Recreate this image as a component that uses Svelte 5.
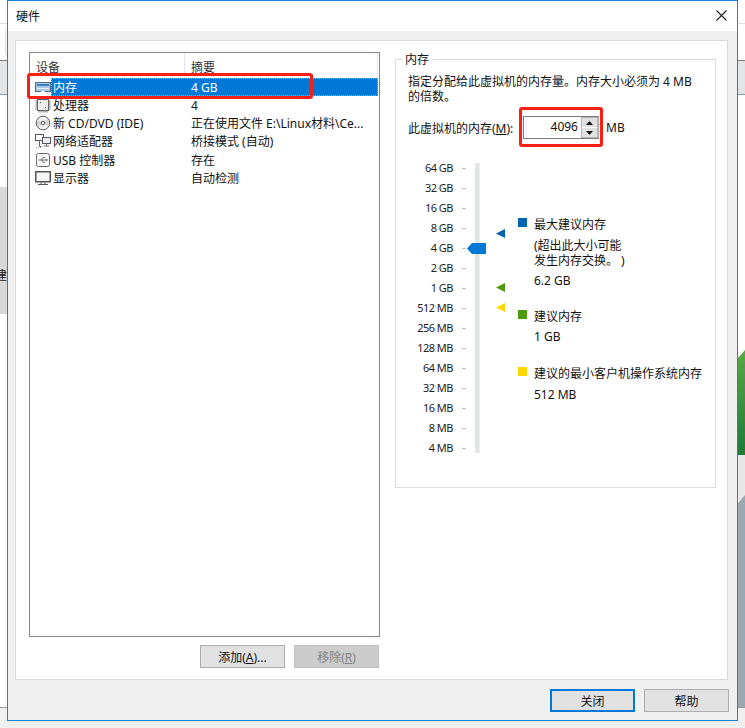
<script lang="ts">
  const devices = [
    { icon: "mem", name: "内存", value: "4 GB" },
    { icon: "cpu", name: "处理器", value: "4" },
    { icon: "cd", name: "新 CD/DVD (IDE)", value: "正在使用文件 E:\\Linux材料\\Ce..." },
    { icon: "net", name: "网络适配器", value: "桥接模式 (自动)" },
    { icon: "usb", name: "USB 控制器", value: "存在" },
    { icon: "mon", name: "显示器", value: "自动检测" },
  ];

  const scale = [
    "64 GB", "32 GB", "16 GB", "8 GB", "4 GB", "2 GB", "1 GB", "512 MB",
    "256 MB", "128 MB", "64 MB", "32 MB", "16 MB", "8 MB", "4 MB",
  ];
</script>

<div class="desk">
  <!-- 后面窗口露出来的部分 -->
  <i class="bg line-l"></i>
  <i class="bg line-r"></i>
  <i class="bg tool"></i>
  <i class="bg band-l"></i>
  <i class="bg band-r"></i>
  <i class="bg grey-l"></i>
  <span class="bg clipped">建</span>
  <svg class="bg green" viewBox="0 0 8 105" preserveAspectRatio="none"><defs><linearGradient id="g" x1="0" y1="0" x2="0" y2="1"><stop offset="0" stop-color="#5aa845" /><stop offset="1" stop-color="#1f7a3c" /></linearGradient></defs><path d="M0 8 L8 0 V105 H0 Z" fill="url(#g)" /></svg>
  <i class="bg pale-r"></i>
  <svg class="bg slate" viewBox="0 0 8 212" preserveAspectRatio="none"><path d="M0 8 L8 0 V212 H0 Z" fill="#9aa8b0" /></svg>
  <i class="bg foot"></i>

  <div class="window">
    <div class="title">
      <span>硬件</span>
      <svg class="close" width="11" height="11" viewBox="0 0 11 11"><path d="M.5.5l10 10M10.5.5l-10 10" stroke="#222" stroke-width="1.1" fill="none" /></svg>
    </div>

    <div class="body">
      <div class="panel">
        <div class="left">
          <div class="list">
            <div class="head">
              <span class="h1">设备</span>
              <span class="h2">摘要</span>
            </div>
            {#each devices as d, i (d.icon)}
              <div class="row">
                <svg class="ico" width="16" height="16" viewBox="0 0 16 16">
                  {#if d.icon === "mem"}
                    <rect x=".5" y="3.5" width="15" height="9" fill="#a9c8e6" stroke="#54697d" />
                    <rect x="2" y="5" width="12" height="2" fill="#3f80bb" />
                    <path d="M2 9.5h12" stroke="#e4f0fa" />
                    <path d="M6 12.5h4" stroke="#e4f0fa" />
                  {:else if d.icon === "cpu"}
                    <rect x="2.5" y="2.5" width="11" height="11" fill="#ededed" stroke="#5f5f5f" />
                    <path d="M4 .5v2M6 .5v2M8 .5v2M10 .5v2M12 .5v2M4 13.5v2M6 13.5v2M8 13.5v2M10 13.5v2M12 13.5v2M.5 4h2M.5 6h2M.5 8h2M.5 10h2M.5 12h2M13.5 4h2M13.5 6h2M13.5 8h2M13.5 10h2M13.5 12h2" stroke="#6d6d6d" />
                    <path d="M5 5h1v1H5zM10 10h1v1h-1z" fill="#666" />
                  {:else if d.icon === "cd"}
                    <circle cx="8" cy="8" r="6.8" fill="#f2f2f2" stroke="#5a5a5a" />
                    <path d="M8 8L3.6 12.2A6 6 0 0 1 3 5z" fill="#d4d4d4" />
                    <path d="M8 8l4.4-4.2A6 6 0 0 1 13 11z" fill="#d4d4d4" />
                    <circle cx="8" cy="8" r="1.8" fill="#fff" stroke="#555" />
                  {:else if d.icon === "net"}
                    <rect x=".5" y="1.5" width="8" height="6" fill="#fff" stroke="#555" />
                    <rect x="7.5" y="4.5" width="8" height="6" fill="#e8eef4" stroke="#555" />
                    <path d="M11.5 10.5v2M9 13h5M4.5 7.5v6M4.5 13.5h2" stroke="#666" fill="none" />
                    <path d="M1 14.5h5" stroke="#999" stroke-dasharray="1 1" />
                  {:else if d.icon === "usb"}
                    <rect x="1.5" y="1.5" width="13" height="13" rx="2" fill="#fafafa" stroke="#666" />
                    <path d="M3.5 8h8M6 8l2-2.5h2M6.5 8l2 2.5h1.5" stroke="#6a6a6a" fill="none" />
                    <path d="M11 6.5l2 1.5-2 1.5z" fill="#6a6a6a" />
                  {:else}
                    <rect x=".75" y="1.75" width="14.5" height="10" fill="#f4f6f8" stroke="#555" stroke-width="1.5" />
                    <path d="M3 14.5h10M6 12.5v1.5M10 12.5v1.5" stroke="#555" />
                  {/if}
                </svg>
                <div class="cells" class:sel={i === 0}>
                  <span class="name">{d.name}</span>
                  <span class="val">{d.value}</span>
                </div>
              </div>
            {/each}
          </div>
          <div class="btns">
            <button>添加(<u>A</u>)...</button>
            <button class="off">移除(<u>R</u>)</button>
          </div>
        </div>

        <div class="group">
          <span class="legend">内存</span>
          <p class="desc">指定分配给此虚拟机的内存量。内存大小必须为 4 MB<br />的倍数。</p>
          <div class="mem">
            <span class="lab">此虚拟机的内存(<u>M</u>):</span>
            <div class="spin">
              <span class="num">4096</span>
              <div class="arrows">
                <span class="ar"><svg width="7" height="4" viewBox="0 0 7 4"><path d="M3.5 0L7 4H0z" fill="#111" /></svg></span>
                <span class="ar"><svg width="7" height="4" viewBox="0 0 7 4"><path d="M0 0h7L3.5 4z" fill="#111" /></svg></span>
              </div>
            </div>
            <span class="unit">MB</span>
          </div>

          <div class="slider">
            <div class="scale">
              {#each scale as s (s)}
                <div class="tick"><span>{s}</span><i></i></div>
              {/each}
            </div>
            <div class="track"></div>
            <svg class="thumb" width="19" height="11" viewBox="0 0 19 11"><path d="M0 5.5L5 0h14v11H5z" fill="#0078d7" /></svg>
            <svg class="mark m1" width="9" height="9" viewBox="0 0 9 9"><path d="M0 4.5L9 0v9z" fill="#0063b1" /></svg>
            <svg class="mark m2" width="9" height="9" viewBox="0 0 9 9"><path d="M0 4.5L9 0v9z" fill="#4a9a0a" /></svg>
            <svg class="mark m3" width="9" height="9" viewBox="0 0 9 9"><path d="M0 4.5L9 0v9z" fill="#ffd800" /></svg>

            <div class="notes">
              <div class="note n1">
                <i class="sq blue"></i>
                <div class="tx">
                  <div class="t">最大建议内存</div>
                  <div class="sub">(超出此大小可能<br />发生内存交换。&nbsp;)</div>
                  <div class="v v1">6.2 GB</div>
                </div>
              </div>
              <div class="note n2">
                <i class="sq green2"></i>
                <div class="tx">
                  <div class="t">建议内存</div>
                  <div class="v">1 GB</div>
                </div>
              </div>
              <div class="note n3">
                <i class="sq yellow"></i>
                <div class="tx">
                  <div class="t">建议的最小客户机操作系统内存</div>
                  <div class="v v1">512 MB</div>
                </div>
              </div>
            </div>
          </div>
        </div>
      </div>

      <div class="footer">
        <button class="wide primary">关闭</button>
        <button class="wide">帮助</button>
      </div>
    </div>
  </div>

  <!-- 截图上的红框标注 -->
  <i class="mark-box box1"></i>
  <i class="mark-box box2"></i>
</div>

<style>
  :global(body) {
    background: #fff;
  }

  .desk {
    position: relative;
    width: 745px;
    height: 728px;
    overflow: hidden;
    background: #fff;
    font-family: "Noto Sans", "Noto Sans CJK SC", sans-serif;
    font-size: 12px;
    color: #111;
  }

  .bg {
    position: absolute;
    display: block;
  }
  .line-l { left: 0; top: 23px; width: 8px; height: 1px; background: #dedede; }
  .line-r { left: 738px; top: 23px; width: 7px; height: 1px; background: #dedede; }
  .tool { left: 5px; top: 28px; width: 3px; height: 26px; border: 1px solid #dcdcdc; border-radius: 2px; }
  .band-l, .band-r {
    top: 60px;
    height: 33px;
    background: #e3e4e6;
    border-top: 1px solid #7f7f7f;
    border-bottom: 1px solid #7f9db3;
  }
  .band-l { left: 0; width: 8px; }
  .band-r { left: 738px; width: 7px; }
  .grey-l { left: 0; top: 187px; width: 8px; height: 127px; background: #d8d8d8; }
  .clipped { left: -5px; top: 268px; font-size: 12px; line-height: 16px; }
  .green { left: 738px; top: 350px; width: 7px; height: 105px; }
  .pale-r { left: 738px; top: 455px; width: 7px; height: 45px; background: #e8e8e8; }
  .slate { left: 738px; top: 495px; width: 7px; height: 212px; }
  .foot { left: 0; top: 707px; width: 745px; height: 21px; background: #f0f0f0; border-top: 1px solid #8d9aa1; }

  .window {
    position: absolute;
    left: 7px;
    top: 0;
    width: 729px;
    height: 719px;
    display: flex;
    flex-direction: column;
    border: 1px solid #1a82d6;
    background: #f0f0f0;
  }

  .title {
    height: 30px;
    flex: none;
    display: flex;
    align-items: center;
    justify-content: space-between;
    padding: 0 10px 0 8px;
    background: #fff;
  }

  .close {
    margin-top: -1px;
  }

  .body {
    flex: 1;
    display: flex;
    flex-direction: column;
    padding: 9px 9px 0 7px;
    min-height: 0;
  }

  .panel {
    height: 640px;
    box-sizing: border-box;
    flex: none;
    display: flex;
    background: #fff;
    border: 1px solid #d9d9d9;
    padding: 11px 0 0 13px;
  }

  .left {
    width: 351px;
    flex: none;
  }

  .list {
    height: 585px;
    box-sizing: border-box;
    border: 1px solid #828790;
    background: #fff;
  }

  .head {
    height: 25px;
    display: flex;
    line-height: 30px;
    color: #333;
  }
  .h1 {
    width: 155px;
    padding-left: 6px;
    box-sizing: border-box;
    border-right: 1px solid #e5e5e5;
  }
  .h2 {
    width: 193px;
    padding-left: 6px;
    box-sizing: border-box;
    border-right: 1px solid #e5e5e5;
  }

  .row {
    display: flex;
    align-items: center;
    height: 18.15px;
    padding: 0 1px 0 5px;
  }
  .ico {
    flex: none;
  }
  .cells {
    flex: 1;
    box-sizing: border-box;
    height: 18px;
    display: flex;
    align-items: center;
    padding-left: 2px;
  }
  .name {
    width: 138px;
    flex: none;
    white-space: nowrap;
  }
  .val {
    white-space: nowrap;
  }
  .sel {
    background: #0078d7;
    color: #fff;
    outline: 1px dotted #ffa030;
    outline-offset: -1px;
  }

  button {
    font: inherit;
    color: #111;
    padding: 0;
    height: 23px;
    box-sizing: border-box;
    background: #e1e1e1;
    border: 1px solid #adadad;
  }

  .btns {
    display: flex;
    justify-content: flex-end;
    gap: 9px;
    margin-top: 8px;
    padding-right: 1px;
  }
  .btns button {
    width: 85px;
  }
  .off {
    background: #cccccc;
    border-color: #bfbfbf;
    color: #838383;
  }

  .group {
    position: relative;
    box-sizing: border-box;
    width: 321px;
    height: 429px;
    margin: 7px 0 0 15px;
    border: 1px solid #dcdcdc;
    padding: 14px 0 0 12px;
  }
  .legend {
    position: absolute;
    left: 6px;
    top: -8px;
    padding: 0 3px;
    line-height: 16px;
    background: #fff;
  }
  .desc {
    margin: 0;
    line-height: 15px;
    white-space: nowrap;
  }

  .mem {
    display: flex;
    align-items: center;
    height: 23px;
    margin-top: 12px;
  }
  .lab {
    width: 115px;
    flex: none;
    white-space: nowrap;
  }
  .spin {
    width: 76px;
    height: 23px;
    box-sizing: border-box;
    flex: none;
    display: flex;
    justify-content: flex-end;
    border: 1px solid #7a7a7a;
    border-right-color: #adadad;
    border-bottom-color: #7a7a7a;
  }
  .num {
    flex: 1;
    text-align: right;
    padding-right: 3px;
    line-height: 19px;
  }
  .arrows {
    width: 17px;
    flex: none;
    display: flex;
    flex-direction: column;
    gap: 1px;
    border: 1px solid #b5b5b5;
    box-sizing: border-box;
    background: #fff;
  }
  .ar {
    flex: 1;
    display: flex;
    align-items: center;
    justify-content: center;
    background: #e1e1e1;
  }
  .unit {
    margin-left: 7px;
  }

  .slider {
    position: relative;
    display: flex;
    margin-top: 19px;
  }
  .scale {
    width: 58px;
    flex: none;
  }
  .tick {
    height: 20px;
    display: flex;
    align-items: center;
    justify-content: flex-end;
    color: #222;
    font-size: 11px;
    letter-spacing: -0.5px;
  }
  .tick span {
    padding-bottom: 2px;
  }
  .tick i {
    width: 4px;
    height: 1px;
    margin-left: 9px;
    background: #bdbdbd;
  }
  .track {
    width: 5px;
    height: 290px;
    margin: 5px 0 0 9px;
    flex: none;
    background: #e1e4e4;
    border-right: 1px solid #ededed;
    box-sizing: border-box;
  }
  .thumb {
    position: absolute;
    left: 59px;
    top: 85px;
  }
  .mark {
    position: absolute;
    left: 88px;
  }
  .m1 { top: 71px; }
  .m2 { top: 125px; }
  .m3 { top: 145px; }

  .notes {
    margin: 59px 0 0 38px;
  }
  .note {
    display: flex;
    position: relative;
  }
  .n2 { margin-top: 20px; }
  .n3 { margin-top: 21px; }
  .sq {
    width: 9px;
    height: 9px;
    flex: none;
    margin: 1px 7px 0 0;
  }
  .blue { background: #0063b1; }
  .green2 { background: #4a9a0a; }
  .yellow { background: #ffd800; }
  .t, .v {
    line-height: 16px;
    white-space: nowrap;
  }
  .sub {
    margin-top: 6px;
    line-height: 14.5px;
    white-space: nowrap;
  }
  .v {
    margin-top: 4px;
  }
  .v1 {
    margin-top: 5px;
  }

  .footer {
    flex: 1;
    display: flex;
    justify-content: flex-end;
    gap: 9px;
    padding: 9px 0 0;
    margin-right: -1px;
  }
  .wide {
    width: 85px;
  }
  .primary {
    border: 2px solid #0078d7;
  }

  .mark-box {
    position: absolute;
    display: block;
    box-sizing: border-box;
    border: 3px solid #fb1e12;
    border-radius: 3px;
    pointer-events: none;
  }
  .box1 { left: 27px; top: 73px; width: 286px; height: 26px; }
  .box2 { left: 519px; top: 107px; width: 84px; height: 40px; }
</style>
